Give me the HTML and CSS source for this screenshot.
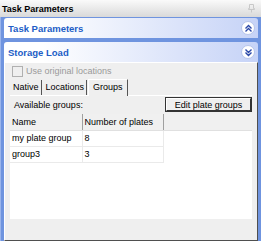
FILE: index.html
```html
<!DOCTYPE html>
<html lang="en">
<head>
    <meta charset="UTF-8">
    <title>Task Parameters</title>
    <link rel="stylesheet" href="styles.css">
</head>
<body>
    <div class="titlebar">
        <span>Task Parameters</span>
        <svg class="pin" width="7" height="9" viewBox="0 0 7 9">
            <path d="M1.5 0.5h4v4h1v1h-6v-1h1z M3.5 5.5v3" fill="none" stroke="#c8c8c8" stroke-width="1"/>
        </svg>
    </div>

    <div class="pane">
        <div class="section-head">
            <span>Task Parameters</span>
            <span class="chevron">
                <svg width="9" height="9" viewBox="0 0 9 9">
                    <path d="M1.5 4.5l3-3 3 3M1.5 7.5l3-3 3 3" fill="none" stroke="#2a48a8" stroke-width="1.4"/>
                </svg>
            </span>
        </div>

        <div class="section-head">
            <span>Storage Load</span>
            <span class="chevron">
                <svg width="9" height="9" viewBox="0 0 9 9">
                    <path d="M1.5 1.5l3 3 3-3M1.5 4.5l3 3 3-3" fill="none" stroke="#2a48a8" stroke-width="1.4"/>
                </svg>
            </span>
        </div>

        <div class="section-body">
            <label class="check">
                <span class="box"></span>
                Use original locations
            </label>

            <div class="tabs">
                <div class="tab">Native</div>
                <div class="tab">Locations</div>
                <div class="tab active">Groups</div>
            </div>

            <div class="tab-page">
                <div class="toolbar">
                    <span>Available groups:</span>
                    <button class="btn">Edit plate groups</button>
                </div>

                <div class="grid">
                    <table>
                        <tr>
                            <th class="col-name">Name</th>
                            <th class="col-count">Number of plates</th>
                            <th class="col-fill"></th>
                        </tr>
                        <tr>
                            <td>my plate group</td>
                            <td>8</td>
                            <td class="fill"></td>
                        </tr>
                        <tr>
                            <td>group3</td>
                            <td>3</td>
                            <td class="fill"></td>
                        </tr>
                    </table>
                </div>
            </div>
        </div>
    </div>
</body>
</html>
```

FILE: styles.css
```css
* {
    margin: 0;
    padding: 0;
    box-sizing: border-box;
}
body {
    width: 261px;
    height: 241px;
    overflow: hidden;
    font-family: 'Liberation Sans', Arial, sans-serif;
    font-size: 9px;
    color: #000;
    background: #6f94df;
    white-space: nowrap;
}
.titlebar {
    height: 17px;
    display: flex;
    align-items: center;
    justify-content: space-between;
    padding: 0 6px 0 2px;
    font-weight: bold;
    font-size: 9px;
    background: linear-gradient(#fafafa, #d9d9d9);
}
.pane {
    display: flex;
    flex-direction: column;
    gap: 4px;
    padding: 1px 3px 0 3px;
    height: 224px;
    border-left: 1px solid #9bb5ec;
}
.section-head {
    height: 20px;
    display: flex;
    align-items: center;
    justify-content: space-between;
    padding: 0 3px 0 4px;
    border-radius: 3px 3px 0 0;
    background: linear-gradient(90deg, #ffffff 15%, #c6d3f7);
    color: #215dc6;
    font-weight: bold;
    font-size: 9.5px;
}
.chevron {
    width: 14px;
    height: 14px;
    border-radius: 50%;
    background: #fff;
    border: 1px solid #b7c5ea;
    display: flex;
    align-items: center;
    justify-content: center;
}
.section-body {
    flex: 1;
    margin-top: -4px;
    background: #efefef;
    border: 1px solid;
    border-color: #fff #4f4f4f #4f4f4f #fff;
    padding: 1px 5px 21px 5px;
    display: flex;
    flex-direction: column;
}
.check {
    display: flex;
    align-items: center;
    gap: 3px;
    height: 14px;
    padding-left: 2px;
    color: #9a9a9a;
}
.box {
    width: 11px;
    height: 11px;
    border: 1px solid #b0b0b0;
    background: #efefef;
}
.tabs {
    display: flex;
    align-items: flex-end;
    height: 18px;
    border-bottom: 1px solid #fff;
}
.tab {
    height: 15px;
    padding: 2px 2px 0 3px;
    border-right: 1px solid #555;
    margin-right: 1px;
}
.tab.active {
    height: 17px;
    padding: 2px 4px 0 4px;
    margin-bottom: -1px;
    border-top: 1px solid #fff;
    border-left: 1px solid #fff;
    background: #efefef;
}
.tab-page {
    flex: 1;
    display: flex;
    flex-direction: column;
    padding: 1px 0 0 0;
}
.toolbar {
    display: flex;
    justify-content: space-between;
    align-items: center;
    padding: 0 1px 0 4px;
    height: 15px;
}
.btn {
    font-family: inherit;
    font-size: 9px;
    width: 85px;
    height: 13px;
    background: #efefef;
    border: 1px solid;
    border-color: #fff #333 #333 #fff;
    outline: 1px solid #333;
}
.grid {
    flex: 1;
    margin-top: 2px;
    background: #fff;
}
table {
    width: 100%;
    border-collapse: collapse;
    table-layout: fixed;
}
th {
    font-weight: normal;
    text-align: left;
    height: 16px;
    padding: 0 2px;
    background: #f0f0f0;
    border-right: 1px solid #a0a0a0;
    border-bottom: 1px solid #e0e0e0;
}
.col-name {
    width: 72px;
}
.col-count {
    width: 81px;
}
.col-fill {
    border-right: none;
}
td {
    height: 16px;
    padding: 0 2px;
    border-right: 1px solid #eaeaea;
    border-bottom: 1px solid #eaeaea;
}
td.fill {
    border: none;
}
```
